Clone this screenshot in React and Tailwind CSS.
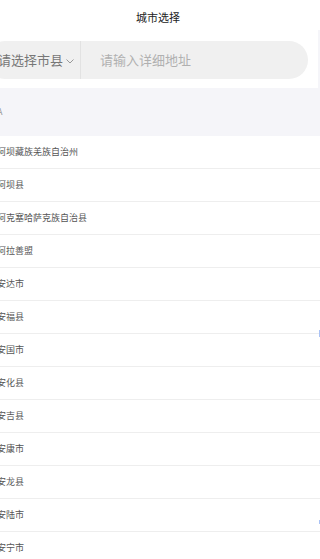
const CITIES = [
  '阿坝藏族羌族自治州',
  '阿坝县',
  '阿克塞哈萨克族自治县',
  '阿拉善盟',
  '安达市',
  '安福县',
  '安国市',
  '安化县',
  '安吉县',
  '安康市',
  '安龙县',
  '安陆市',
  '安宁市',
  '安平县',
]

export default function App() {
  return (
    <div className="relative w-[320px] h-[559px] overflow-hidden bg-[#f5f5f9]" style={{ fontFamily: '"Noto Sans CJK SC", "Noto Sans", sans-serif' }}>
      {/* Title */}
      <div className="h-[30px] bg-white flex items-center justify-center text-[11px] text-[#222] pl-[-2px]">
        <span className="-ml-[4px] mt-[4px]">城市选择</span>
      </div>

      {/* Search */}
      <div className="w-[318px] h-[58px] bg-white pt-[11px]">
        <div className="-ml-[14px] w-[322px] h-[38px] rounded-full bg-[#f0f0f0] flex items-center">
          <div className="flex items-center pl-[12px] pr-[5px] text-[13px] text-[#777]">
            <span>请选择市县</span>
            <svg width="10" height="10" viewBox="0 0 10 10" className="ml-[2px] mt-[1px]">
              <path d="M1.5 3.5 L5 7 L8.5 3.5" fill="none" stroke="#999" strokeWidth="1" />
            </svg>
          </div>
          <div className="w-px self-stretch bg-[#e2e2e2]" />
          <div className="pl-[19px] text-[13px] text-[#b0b0b0]">请输入详细地址</div>
        </div>
      </div>

      {/* Section header */}
      <div className="h-[48px] flex items-center text-[9px] text-[#999]">
        <span className="-ml-[3px]">A</span>
      </div>

      {/* List */}
      <div className="bg-white">
        {CITIES.map(c => (
          <div key={c} className="h-[33px] flex items-center border-b border-[#eeeeee] text-[9px] text-[#555]">
            <span className="-ml-[3px]">{c}</span>
          </div>
        ))}
      </div>

      {/* index bar edge */}
      <div className="absolute right-0 top-[330px] w-[1px] h-[7px] bg-[#a9c2f5]" />
      <div className="absolute right-0 top-[520px] w-[1px] h-[4px] bg-[#a9c2f5]" />
    </div>
  )
}
